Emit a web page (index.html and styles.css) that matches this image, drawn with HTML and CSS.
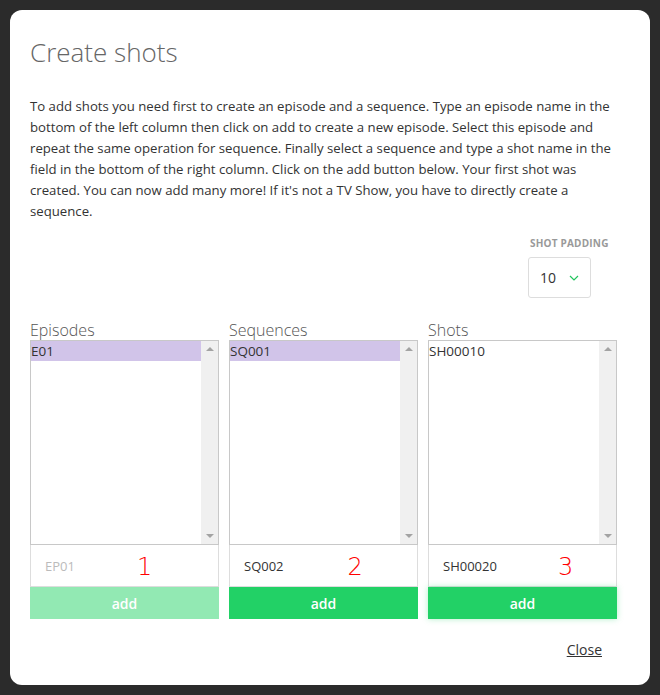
FILE: index.html
```html
<!DOCTYPE html>
<html>
<head>
<meta charset="utf-8">
<link rel="stylesheet" href="styles.css">
</head>
<body>
<div class="modal">
  <h1 class="title">Create shots</h1>
  <p class="intro">To add shots you need first to create an episode and a sequence. Type an episode name in the bottom of the left column then click on add to create a new episode. Select this episode and repeat the same operation for sequence. Finally select a sequence and type a shot name in the field in the bottom of the right column. Click on the add button below. Your first shot was created. You can now add many more! If it's not a TV Show, you have to directly create a sequence.</p>
  <div class="padding-row">
    <div class="padding-field">
      <div class="label">SHOT PADDING</div>
      <div class="select">
        <span>10</span>
        <svg class="chev" width="10" height="6" viewBox="0 0 10 6"><path d="M1 1 L5 5 L9 1" fill="none" stroke="#22c55e" stroke-width="1.2"/></svg>
      </div>
    </div>
  </div>
  <div class="columns">
    <div class="col">
      <div class="col-title">Episodes</div>
      <div class="list">
        <div class="items"><div class="item selected">E01</div></div>
        <div class="scroll"><span class="up"></span><span class="down"></span></div>
      </div>
      <div class="field"><span class="placeholder">EP01</span><span class="num n1">1</span></div>
      <div class="btn disabled">add</div>
    </div>
    <div class="col">
      <div class="col-title">Sequences</div>
      <div class="list">
        <div class="items"><div class="item selected">SQ001</div></div>
        <div class="scroll"><span class="up"></span><span class="down"></span></div>
      </div>
      <div class="field"><span class="value">SQ002</span><span class="num n2">2</span></div>
      <div class="btn">add</div>
    </div>
    <div class="col">
      <div class="col-title">Shots</div>
      <div class="list">
        <div class="items"><div class="item">SH00010</div></div>
        <div class="scroll"><span class="up"></span><span class="down"></span></div>
      </div>
      <div class="field"><span class="value">SH00020</span><span class="num n3">3</span></div>
      <div class="btn glow">add</div>
    </div>
  </div>
  <div class="footer"><a class="close">Close</a></div>
</div>
</body>
</html>
```
FILE: styles.css
```css
html, body { margin: 0; padding: 0; }
body {
  background: #2b2b2b;
  padding: 10px;
  font-family: "Open Sans", "Noto Sans", sans-serif;
  color: #333;
  width: 640px;
}
.modal {
  background: #fff;
  border-radius: 12px;
  height: 675px;
  box-sizing: border-box;
  padding: 24px 33px 0 20px;
}
.title {
  margin: 0;
  font-weight: 300;
  font-size: 26px;
  line-height: 36px;
  color: #666;
}
.intro {
  margin: 26px 0 0;
  font-size: 13.2px;
  line-height: 21px;
  color: #333;
}
.padding-row {
  display: flex;
  justify-content: flex-end;
  margin-top: 14px;
}
.padding-field { display: flex; flex-direction: column; align-items: flex-start; width: 87px; }
.label {
  font-size: 10px;
  font-weight: 700;
  color: #999;
  letter-spacing: 0.2px;
}
.select {
  margin-top: 7px;
  margin-left: -2px;
  width: 63px;
  height: 41px;
  box-sizing: border-box;
  border: 1px solid #ddd;
  border-radius: 3px;
  display: flex;
  align-items: center;
  padding-left: 11px;
  gap: 13px;
  font-size: 14px;
  color: #333;
}
.columns {
  display: grid;
  grid-template-columns: 189px 189px 189px;
  column-gap: 10px;
  margin-top: 22px;
}
.col { display: flex; flex-direction: column; }
.col-title {
  font-size: 16px;
  font-weight: 300;
  color: #555;
  line-height: 20px;
  height: 20px;
}
.list {
  height: 205px;
  box-sizing: border-box;
  border: 1px solid #c8c8c8;
  display: flex;
}
.items { flex: 1; }
.item {
  font-size: 13.5px;
  line-height: 20px;
  height: 20px;
  color: #333;
}
.item.selected { background: #d1c4e9; }
.scroll {
  width: 17px;
  background: #f0f0f0;
  display: flex;
  flex-direction: column;
  justify-content: space-between;
  align-items: center;
  padding: 6px 0;
}
.up, .down { width: 0; height: 0; border-left: 4px solid transparent; border-right: 4px solid transparent; }
.up { border-bottom: 4px solid #a3a3a3; }
.down { border-top: 4px solid #a3a3a3; }
.field {
  height: 42px;
  box-sizing: border-box;
  border: 1px solid #ddd;
  border-top: none;
  display: flex;
  align-items: center;
  padding-left: 14px;
  font-size: 13px;
}
.placeholder { color: #bbb; }
.value { color: #333; }
.num {
  color: #f00;
  font-size: 24px;
  font-family: "DejaVu Sans", sans-serif;
  font-weight: 300;
  margin-top: 2px;
}
.n1 { margin-left: 62px; }
.n2 { margin-left: 64px; }
.n3 { margin-left: 61px; }
.btn {
  height: 32px;
  background: #22d166;
  color: #fff;
  display: flex;
  align-items: center;
  justify-content: center;
  font-size: 14px;
  font-weight: 600;
}
.btn.disabled { background: #92e9b3; }
.btn.glow { box-shadow: 0 0 6px rgba(34, 209, 102, 0.35); }
.footer {
  display: flex;
  justify-content: flex-end;
  margin-top: 21px;
  padding-right: 15px;
}
.close {
  font-size: 14px;
  color: #333;
  text-decoration: underline;
}
```
